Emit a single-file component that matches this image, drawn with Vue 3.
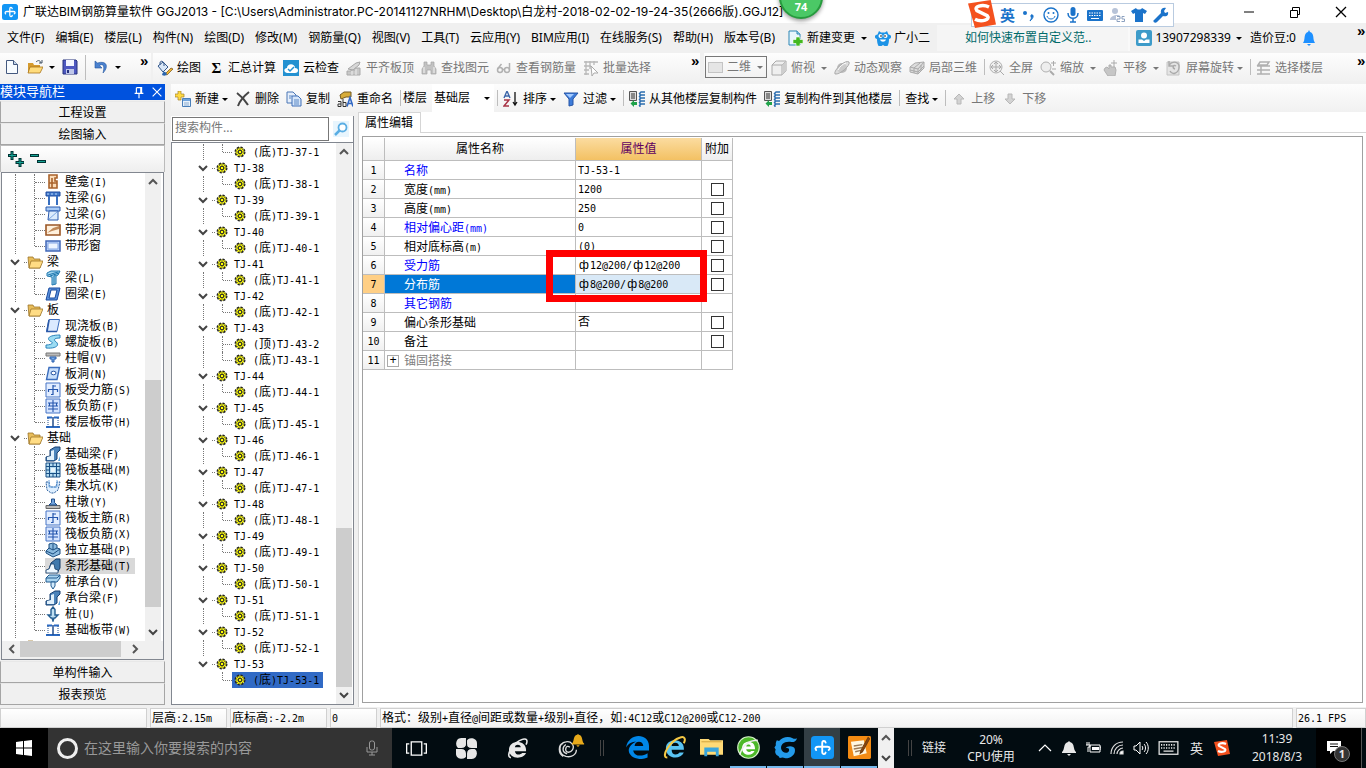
<script setup>
import { h, reactive } from 'vue'

const icons = {
  app: '<rect width="16" height="16" rx="2.500" fill="#1296f5"/><path d="M10.200 4.600C9.800 3 7.800 3 7.800 5v6c0 2 2 2 2.400.5M3.600 9.800C2.400 8.300 3.500 7.500 5 7.500h6.500c1.800 0 2 1.500.8 2.300" fill="none" stroke="#fff" stroke-width="1.300" stroke-linecap="round"/>',
  changeDoc: '<path d="M2 1h8l3 3v11H2z" fill="#e8f6fc" stroke="#2c86b5"/><path d="M10 1v3h3" fill="#9fd3ea" stroke="#2c86b5"/><path d="M9 7h4v2.500h3v4h-3V16H9v-2.500H6v-4h3z" fill="#43b81f" stroke="#fff" stroke-width=".6"/>',
  mascot: '<path d="M4 1l2 1.500h4L12 1l1.500 3.500C17 5 17 8 14 9c0 3-.5 5-1.500 7h-3L8 15l-1.500 1h-3C2.500 14 2 12 2 9-1 8-1 5 2.500 4.500z" fill="#1d93e6"/><circle cx="5.500" cy="6" r="2" fill="#fff"/><circle cx="10.500" cy="6" r="2" fill="#fff"/><circle cx="6" cy="6" r=".8"/><circle cx="10" cy="6" r=".8"/><path d="M5 9.500h6c-1 3-5 3-6 0z" fill="#fff"/>',
  user: '<rect width="16" height="16" rx="2" fill="#3d9bc9"/><circle cx="8" cy="5.500" r="3" fill="#fff"/><path d="M2.500 13V9.500H6L8 11l2-1.500h3.500V13z" fill="#fff"/>',
  bellBlue: '<path d="M8 0l1 2c4 1 3 6 4 9l1 2H2l1-2c1-3 0-8 4-9zM6 14h4l-2 2z" fill="#1e90ff"/>',
  file: '<path d="M2.500 1.500h7l4 4v9h-11z" fill="#f8fcff" stroke="#44597f"/><path d="M9.500 1.500v4h4" fill="#c4d6ea" stroke="#44597f"/>',
  open: '<path d="M1 4h5l1 2h6v8H1z" fill="#d49a2e"/><path d="M3 8h13l-3 6H1z" fill="#ffdc7c" stroke="#a8741c" stroke-width=".8"/><path d="M9 3c2-2 4-2 5 1M12 4h3V1" fill="none" stroke="#456"/>',
  save: '<path d="M1 1h13l1 1v13H1z" fill="#4e58c0" stroke="#26327d"/><path d="M4 1h8v6H4z" fill="#f2f5ff"/><path d="M4 10h8v5H4z" fill="#bfc7e9"/><path d="M5 11h2v3H5z" fill="#26327d"/>',
  undo: '<path d="M2 2v7h7L6.500 6.500C10 4 12 7 10 14c6-6 4-13-5.500-10z" fill="#4b82cf" stroke="#24569d" stroke-width=".6"/>',
  paint: '<path d="M1 6l5-4 5 5-5 5z" fill="#d9e7f7" stroke="#34588c"/><path d="M3 5V3c0-3 4-2 4 1v2" fill="none" stroke="#34588c"/><path d="M8 14l6-6 2 1-6 6z" fill="#f0b432" stroke="#735215" stroke-width=".7"/><path d="M5 15c1-4 3-4 5-1-1 2-3 2-5 1z" fill="#2c66af"/>',
  cloud: '<rect width="16" height="16" fill="#2391d1"/><path d="M4 13C0 12 1 8 4 8c0-5 8-5 8 0 4 0 4 5 0 5z" fill="#fff"/><path d="M5 9l2 2 4-4" fill="none" stroke="#2391d1" stroke-width="1.500"/>',
  align: '<path d="M2 9l8-6 4-1-1 3-6 5z" fill="#d8d8d8" stroke="#a7a7a7"/><path d="M1 15v-4h4v-1h4V8h5v7z" fill="#c8c8c8" stroke="#aaa"/><path d="M6 11v4M10 9v6" stroke="#eee"/>',
  binoc: '<path d="M3 2h3v3h4V2h3v4l2 3v5h-5v-4H6v4H1V9l2-3z" fill="#c2c2c2" stroke="#a4a4a4" stroke-width=".7"/><path d="M3 7v6M13 7v6" stroke="#f4f4f4"/>',
  glasses: '<g fill="none" stroke="#b1b1b1" stroke-width="1.500"><circle cx="4" cy="10" r="2.500"/><circle cx="11" cy="10" r="2.500"/><path d="M6.500 9.500h2M1.500 9l4-5M13.500 10V3"/></g>',
  batch: '<path d="M1 2h14M1 6h7M1 10h5M1 14h5M3 1v14M7 1v8M11 1v4" stroke="#b8b8b8" stroke-width="1.300"/><path d="M8 6l7 7h-4l-2 3z" fill="#fff" stroke="#aaa"/>',
  flat: '<rect x=".5" y="3.500" width="14" height="10" fill="#e5e5e5" stroke="#c4c4c4"/>',
  cube: '<path d="M1 5l4-4h10v10l-4 4H1z" fill="#efefef" stroke="#aaa"/><path d="M1 5h10l4-4M11 5v10" fill="none" stroke="#aaa"/><path d="M11 5l4-4v10l-4 4z" fill="#cecece"/>',
  orbit: '<circle cx="8" cy="8" r="5" fill="#bbb"/><path d="M1 14C-1 10 12-1 15 2c2 3-9 13-14 12z" fill="#d2d2d2" fill-opacity=".7" stroke="#aaa"/><path d="M4 10c2-4 5-6 8-7" fill="none" stroke="#fff"/>',
  cubes: '<path d="M1 7l5-4 9-1v6l-6 6-8-2z" fill="#ddd" stroke="#aaa"/><path d="M1 7l8 2 6-7M9 9v5M5 8l6-5M5 8v5M12 5v6M1 10l8 2 6-6" fill="none" stroke="#aaa"/>',
  fullscreen: '<circle cx="7" cy="7" r="6" fill="#eee" stroke="#b0b0b0"/><path d="M7 2v10M2 7h10M5 4l2-2 2 2M5 10l2 2 2-2M4 5L2 7l2 2M10 5l2 2-2 2M11 11l4 4" fill="none" stroke="#aaa"/>',
  zoom: '<circle cx="6" cy="7" r="5" fill="#eee" stroke="#b0b0b0"/><path d="M10 11l4 4" stroke="#aaa" stroke-width="2"/><path d="M11 3h5M13.500 1v5M12 9h4" stroke="#aaa"/>',
  pan: '<path d="M2 8l2-1 2 2V5h2v2h4l1 3-1 6H5l-4-6z" fill="#c6c6c6" stroke="#b0b0b0"/><path d="M11 0v7M8 3h6" stroke="#aaa"/>',
  rotate: '<path d="M1 2h12v13H1z" fill="#e4e4e4" stroke="#c4c4c4"/><path d="M3 5c4-5 11-3 10 3s-7 7-9 3M3 1v5h4M10 6c-3-2-4 2-1 3" fill="none" stroke="#aaa" stroke-width="1.400"/>',
  floors: '<path d="M5 2h9l-2 3H3zM2 6h4M6 6h9M2 10h4M6 10h9M2 14h13M6 5v9" fill="none" stroke="#b0b0b0" stroke-width="1.500"/>',
  create: '<path d="M7.500 7.500h8v8h-8z" fill="#e9f2fb" stroke="#4a7fb9"/><path d="M8 8h7v2H8z" fill="#6fa3dc"/><path d="M9 12h5M9 14h5" stroke="#8bacd0"/><path d="M3 0h3v3h3v3H6v3H3V6H0V3h3z" fill="#ffda42" stroke="#a5822a" stroke-width=".7"/>',
  del: '<path d="M2 2c4 3 8 7 11 12M14 1C9 5 5 9 3 15" fill="none" stroke="#454545" stroke-width="2"/>',
  copy: '<path d="M1 1h6l3 3v8H1z" fill="#e6effb" stroke="#4a76b5"/><path d="M6 5h6l3 3v7H6z" fill="#d6e6fa" stroke="#3f6fb7"/><path d="M8 9h5M8 11h5M8 13h5M3 5h3M3 7h2" stroke="#5b87c3"/>',
  rename: '<path d="M3 4l4-3h7v5H9L4 8z" fill="#d7ac39" stroke="#735921"/><path d="M10 15.500l3-9 3 9M11 12.500h4" fill="none" stroke="#3168c5" stroke-width="1.600"/><path d="M1 10.500h3v5H1v-2.500h3M6 8v7.500h3v-4H6" fill="none" stroke="#333"/>',
  sort: '<path d="M1 7l3-7 3 7M2 5h4" fill="none" stroke="#3c66a9" stroke-width="1.400"/><path d="M1 9h5l-5 6h5" fill="none" stroke="#a83446" stroke-width="1.500"/><path d="M12 1v13M10 11l2 3 2-3" fill="none" stroke="#111" stroke-width="1.300"/>',
  filter: '<path d="M1 2h14L10 8v6l-4 1V8z" fill="#3d7cda" stroke="#2755a5"/><path d="M3 3h8L7 7z" fill="#a5cbff"/>',
  floorCopy: '<path d="M.5.5h7v9h-7z" fill="#ddd" stroke="#555"/><path d="M2 3h4M2 5h4M2 7h4" stroke="#333"/><path d="M10 3l2-2h4M10 6l2-2h4M10 9l2-2h4M10 12l2-2h4M10 15l2-2h4M11 2v14" fill="none" stroke="#2b6daf" stroke-width="1.300"/><path d="M5 8v3h3v3H5v2l-3.500-3.500L5 9z" fill="#20a34a"/>',
  up: '<path d="M8 3l5 5h-3v5H6V8H3z" fill="#d3d3d3" stroke="#b8b8b8"/>',
  down: '<path d="M8 13l5-5h-3V3H6v5H3z" fill="#d3d3d3" stroke="#b8b8b8"/>',
  search: '<rect width="16" height="16" fill="#e8f5fd"/><circle cx="9.500" cy="6.500" r="4" fill="#fff" stroke="#5aaee4" stroke-width="1.800"/><path d="M6.500 9.500L2 14" stroke="#5aaee4" stroke-width="2.500"/>',
  pin: '<path d="M5 3h6v6M5 3v6M3 9.500h10M8 10v5M10 3v6" fill="none" stroke="#fff" stroke-width="1.300"/>',
  close: '<path d="M3 3l10 10M13 3L3 13" stroke="currentColor" stroke-width="1.300"/>',
  expand: '<path d="M4 0v9M0 4.500h9M12 7v9M7.500 11.500h9" stroke="#033" stroke-width="3"/><path d="M4 1v7M1 4.500h7M12 8v7M8.500 11.500h7" stroke="#16a596" stroke-width="1"/>',
  collapse: '<path d="M0 4.500h9M7 10.500h9" stroke="#033" stroke-width="3"/><path d="M1 4.500h7M8 10.500h7" stroke="#16a596" stroke-width="1"/>',
  chevron: '<path d="M4 6l4 4 4-4" fill="none" stroke="#444" stroke-width="2"/>',
  chevUp: '<path d="M4 10l4-4 4 4" fill="none" stroke="#555" stroke-width="2"/>',
  chevLeft: '<path d="M10 4L6 8l4 4" fill="none" stroke="#555" stroke-width="2"/>',
  chevRight: '<path d="M6 4l4 4-4 4" fill="none" stroke="#555" stroke-width="2"/>',
  caret: '<path d="M2 11l6-6 6 6" fill="none" stroke="#fff" stroke-width="1.200"/>',
  folder: '<path d="M1 3h5l1 2h6v9H2z" fill="#e8bd5a" stroke="#9c7427" stroke-width=".8"/><path d="M4 7h12l-3 7H2z" fill="#ffdc84" stroke="#9c7427" stroke-width=".8"/>',
  gear: '<circle cx="8" cy="8" r="4.700" fill="#ff0" stroke="#222" stroke-width="1.600" stroke-dasharray="2.200 1.490"/><path d="M8 3v10M3 8h10M4.500 4.500l7 7M11.500 4.500l-7 7" stroke="#555" stroke-width=".8"/><circle cx="8" cy="8" r="1.800" fill="#ff0" stroke="#222"/>',
  niche: '<path d="M4 1h8v3h-2v3h2v7H4zM7 4v10M4 9h8" fill="#fbdcb8" stroke="#a9622b" stroke-width="1.600"/>',
  linkBeam: '<path d="M1 2h14v4H1z" fill="#3f77c8" stroke="#1e4da0"/><path d="M4 6v9M12 6v9" stroke="#386fc0" stroke-width="2"/><path d="M2 4h12" stroke="#b7d7ff" stroke-dasharray="2"/>',
  lintel: '<path d="M1 1h14v4H1z" fill="#a8caf5" stroke="#2b5aae"/><path d="M4 5h9v9H3z" fill="#dcebfd" stroke="#2b5aae"/><path d="M4 13l8-7" stroke="#7fa9e3"/>',
  hole: '<path d="M1 3h14v10H1z" fill="#fff0dc" stroke="#9b5524" stroke-width="1.600"/><path d="M2 11l6-5 6-2v3l-7 2z" fill="#c18a59"/>',
  window: '<path d="M1 3h14v10H1z" fill="#b9d2f7" stroke="#4168b8" stroke-width="1.500"/><path d="M3 5h10v6H3z" fill="#eef5ff" stroke="#86a7e5"/>',
  beam: '<path d="M2 3l4-2h9l-2 4-2 1v8l-4 1V7L2 6z" fill="#9fd3ee" stroke="#1f77ae"/><path d="M3 5l10-3M5 6l9-3M9 14V6l2-1" fill="none" stroke="#1f77ae"/>',
  ring: '<path d="M4 2h11l-3 12H1z" fill="#5b91dc" stroke="#184a9f"/><path d="M6 4h6l-2 8H4z" fill="#fff" stroke="#184a9f"/>',
  slab: '<path d="M4 1.500h10.500l-2.500 12H1.500z" fill="#dbeaff" stroke="#3b6dbd"/><path d="M4 2L2 13.500h10" fill="none" stroke="#2c5aa8" stroke-width="1.600"/>',
  spiral: '<path d="M15 1C5 1 1 4 5 7c5 2 1 4-4 4v3c10 1 15-3 9-7-2-2 1-3 5-3z" fill="#9bdcf3" stroke="#2b83bb"/>',
  cap: '<path d="M1 3h14v3H1z" fill="#bbb" stroke="#777"/><path d="M5 7h6v2H9v3H7V9H5z" fill="#78aae4" stroke="#2b5fae"/>',
  slabHole: '<path d="M4 1.500h10.500l-2.500 12H1.500z" fill="#c8dffc" stroke="#3b6dbd" stroke-width="1.400"/><ellipse cx="8.500" cy="7" rx="2.500" ry="1.800" fill="#fff" stroke="#2250a0"/>',
  mesh: '<path d="M1 1h14v14H1z" fill="#e2edff" stroke="#4775c5"/><path d="M8 3v10M3.500 10V7.500h9V10M6 12.500h2M8 4h3" fill="none" stroke="#2355ad" stroke-width="1.200"/>',
  mesh2: '<path d="M1 1h14v14H1z" fill="#d6e5ff" stroke="#4775c5"/><path d="M8 2v12M3 5h10M3 11h10M4.500 5v3M11.500 5v3M3 8h10" fill="none" stroke="#2355ad" stroke-width="1.100"/>',
  strip: '<path d="M2 3.500h5M9 3.500h5M1 13h14" stroke="#2b6ac3" stroke-width="1.800"/><path d="M3 4v9M13 4v9" stroke="#234e8d" stroke-dasharray="1 1"/><path d="M8 3v10" stroke="#234e8d" stroke-width="1.500"/>',
  footBeam: '<path d="M1 15v-4l4-1V4l5-3h5v3l-3 3v6l-3 2z" fill="#4b83ba" stroke="#163f70"/><path d="M2 14v-3l4-1V5l3-1v10z" fill="#e1f1fc"/><path d="M13 15l2-5v5z" fill="#65a7db"/>',
  raft: '<path d="M1 1h14v14H1z" fill="#b4dbf0" stroke="#174f85"/><path d="M4.500 4.500h7v7h-7zM4.500 1v14M11.500 1v14M1 4.500h14M1 11.500h14M8 1v3M8 12v3M1 8h3M12 8h3" fill="none" stroke="#174f85"/><path d="M6 6h4v4H6z" fill="#e7f5fc"/>',
  pit: '<path d="M1 4h3l1 5h6l1-5h3l-2 8-4 3H6l-4-3z" fill="#deefff" stroke="#295d9d" stroke-dasharray="2 1"/><path d="M4 2v7h8V2" fill="none" stroke="#6ea6df"/>',
  pier: '<path d="M1 11.500h14v3H1z" fill="#bbb" stroke="#666"/><path d="M6.500 5h3v3.500l2.500 2.500H4l2.500-2.500z" fill="#6fa3de" stroke="#1f4c89"/>',
  isolated: '<path d="M1 9l3-3V2l4-1 4 2v3l3 1v5l-7 3-7-4z" fill="#8bbadf" stroke="#1c4e81"/><path d="M4 6l4 2 4-2M8 8V2M1 9l7 3 7-5" fill="none" stroke="#1c4e81"/>',
  stripFoot: '<path d="M4 11l2-6 5-4h4v9l-3 5z" fill="#3f79ad" stroke="#153d69"/><path d="M1 15v-3l3-1 2-5h3l1 5 3 1v3z" fill="#eef8ff" stroke="#153d69" stroke-width=".8"/>',
  pileCap: '<path d="M1 4l3-3h11v3l-3 4H1z" fill="#aad4ef" stroke="#225c91"/><path d="M6 8h4v4l-2 3-2-3z" fill="#d3ebfc" stroke="#225c91"/><path d="M1 4h11l3-3" fill="none" stroke="#225c91"/>',
  pile: '<path d="M8 1l2 2.500V9h3l-3 3H9l-1 3-1-3H6L3 9h3V3.500z" fill="#bfdff2" stroke="#225c91" stroke-width="1.400"/>',
  mic: '<rect x="5.500" y="1" width="5" height="9" rx="2" fill="none" stroke="currentColor"/><path d="M3 7v5h10V7M8 12v3M5 15h6" fill="none" stroke="currentColor"/>',
  windows: '<path d="M0 2l7-1v6.500H0zM8 1l8-1v7.500H8zM0 8.500h7V15l-7-1zM8 8.500h8V16l-8-1z" fill="#fff"/>',
  taskView: '<path d="M4 3h8v10H4zM2.500 4.500h-2v7h2M13.500 4.500h2v7h-2" fill="none" stroke="#fff"/>',
  fan: '<path d="M8 0v5.500L6 8H3C-1 8-1 0 4 0z" fill="#e7e7e7"/><path d="M16 8h-5.500L8 6V3c0-4 8-4 8 1z" fill="#e7e7e7"/><path d="M8 16v-5.500L10 8h3c4 0 4 8-1 8z" fill="#e7e7e7"/><path d="M0 8h5.500L8 10v3c0 4-8 4-8-1z" fill="#e7e7e7"/><path d="M8 0v5C8 7 6 8 4 8H0M16 8h-4C9 8 8 7 8 4M8 16v-4c0-2 1-4 4-4M4 8c3 0 4 2 4 4" fill="none" stroke="#020c11" stroke-width=".8"/>',
  eWhite: '<path d="M1.500 9C1.500 1 14.500 1 14.500 9v1H6c.5 3.200 4 3.200 5.500 1.500h3c-2 5-13 5-13-2.500zM6 7h4.500C10 4.600 6.500 4.600 6 7z" fill="#e9e9e9"/><path d="M3 15C-2 14 5 3 12 1c3-1 4 1 2.500 4" fill="none" stroke="#e9e9e9" stroke-width="1.200"/>',
  alarm: '<path d="M14 9c0 4-4 6-8 5C0 12 0 4 6 3c4-1 7 3 5 6s-6 2-5-1c0-2 2-2 3-1M4 4C0 5 0 12 4 14M6 5c-3 2-3 6 1 7" fill="none" stroke="#ddd" stroke-width="1"/>',
  bell: '<path d="M8 1l1 1c5 1 3 8 6 10v1H1v-1c3-2 1-9 6-10zM6 14h4l-2 2z" fill="currentColor"/>',
  edge: '<path d="M0 8C2-3 16-2 16 7v3H5c1 5 7 4 10 2v3C8 18 1 14 2 9c1-3 3-4 5-5-3 0-5 1-7 4zM6 7h6c0-4-6-4-6 0z" fill="#0087e8"/>',
  ie: '<path d="M2 8.500C2 1 14.500 1 14.500 8.500V9.500H6c0 4 4 4 5.500 2h3C12 17 2 16 2 8.500zM6 7h5c0-3-5-3-5 0z" fill="#59c3f2"/><path d="M3 15C-2 15 5 3 12 1c3-1 4 1 2.500 4" fill="none" stroke="#f6c945" stroke-width="1.400"/>',
  folderWin: '<path d="M0 2h6l1 1h9v10H0z" fill="#ffda76"/><path d="M3 8h10v6h-2v-3H5v3H3z" fill="#39a5dc"/><path d="M1 4h14" stroke="#d9ab45" stroke-width=".8"/>',
  greenE: '<circle cx="8" cy="8" r="7.500" fill="#4db829" stroke="#d4f1c8" stroke-width=".8"/><path d="M3.500 8.500c0-6 9-6 9 0v.8H6.400c.3 2.200 2.600 2.200 3.600 1.200h2.200c-1.400 3.800-8.700 3.500-8.700-2zM6.400 7.300h3.200c-.3-1.800-2.900-1.800-3.200 0z" fill="#fff"/><path d="M2 13C4 6 9 3 14.500 3" fill="none" stroke="#eee"/>',
  gBlue: '<path d="M13 1.500c1 .6 2 .4 3 0-.5 2-2 2.800-4 2.700C7 3.500 4.500 6 5 9c.6 3 5 3.500 5.500 1 .2-1.500-1-2-2.500-1.500C9 6.500 14 6.500 14.500 9c.8 4-3 6.500-6.500 6.500l-2-.5-2 .3-.8-1.300C1 13 .3 11 1.200 9.500L.3 8l1-1.500C1 5 1.500 4 2 3l1.500.5C6 .5 10 0 13 1.500z" fill="#239bea"/>',
  notes: '<rect width="16" height="16" rx="1" fill="#f38b13"/><path d="M2 4l9-1 2 9-9 2z" fill="#fff7df"/><path d="M4 7l6-1M4 9l6-1M5 11l4-1" stroke="#9a7955"/><path d="M14 1l1 1-5 9-1.500 1 .5-2z" fill="#8b4513" stroke="#713e0c" stroke-width=".7"/>',
  battery: '<path d="M5 5h10v7H5zM15 7h1v3M2 2v3M4 2v3M1 5h4v2H3v5" fill="none" stroke="#fff"/><path d="M7 7h7v3H7z" fill="#fff"/>',
  wifi: '<g fill="none" stroke="#ddd" stroke-width="1.200"><path d="M2 14C2 7 7 2 14 2M5 14c0-5 4-9 9-9M8 14c0-3 3-6 6-6"/><path d="M11 14c0-2 1-3 3-3v3z" fill="#fff"/></g>',
  volume: '<path d="M1 6h2l4-4v12l-4-4H1zM9 6c1 1 1 3 0 4M11 4c2 2 2 6 0 8M13 2c3 3 3 9 0 12" fill="none" stroke="#fff"/>',
  keyboard: '<rect x=".5" y="3" width="15" height="10" fill="none" stroke="currentColor"/><path d="M2 5.500h12M2 8h12" stroke="currentColor" stroke-width="1.300" stroke-dasharray="1 1"/><path d="M4 10.500h8" stroke="currentColor"/>',
  sogou: '<path d="M0 2l13-2 3 14-12 2z" fill="#f4511e"/><path d="M12 4C8 2 3 4 5 6l6 3c2 2-3 4-7 2" fill="none" stroke="#fff" stroke-width="2"/>',
  smile: '<circle cx="8" cy="8" r="7" fill="none" stroke="#1b73ca" stroke-width="1.400"/><circle cx="5.500" cy="6" r="1" fill="#1b73ca"/><circle cx="10.500" cy="6" r="1" fill="#1b73ca"/><path d="M4 9c1 4 7 4 8 0" fill="none" stroke="#1b73ca"/>',
  micBlue: '<rect x="5.500" y="0" width="5" height="9" rx="2.500" fill="#1b73ca"/><path d="M3 6c0 7 10 7 10 0M8 11v4M5 15h6" fill="none" stroke="#1b73ca" stroke-width="1.500"/>',
  keysBlue: '<rect y="3" width="16" height="11" rx="1" fill="#1b73ca"/><path d="M2 6h12M2 8.500h12" stroke="#fff" stroke-dasharray="1.500 1"/><path d="M4 11.500h8" stroke="#fff"/>',
  person: '<circle cx="6" cy="4" r="3" fill="#b7c3d8"/><path d="M1 13c0-5 9-6 10-4H7v4z" fill="#b7c3d8"/><path d="M8 9.500h3v2.500H8v2.500h3M15.500 9.500H13V12h2.500v2.500H12.500" fill="none" stroke="#8ba0bf"/>',
  shirt: '<path d="M5 1c1 2 5 2 6 0l5 3-2 3-2-1v9H4V6L2 7 0 4z" fill="#1b73ca"/>',
  wrench: '<path d="M1 13l7-7c-1-4 2-6 5-5l-2 3 1 2 3-1c1 4-3 5-5 4l-6 6c-2 2-5-1-3-2z" fill="#1b73ca"/>',
  punct: '<circle cx="4" cy="6" r="2" fill="#1b73ca"/><path d="M10 8c3-1 3 3-1 6 1-2 2-3 1-4z" fill="#1b73ca" stroke="#1b73ca"/>',
  minimize: '<path d="M3 8h10" stroke="#000"/>',
  restore: '<path d="M3.500 6.500h7v7h-7zM5.500 6V3.500h7v7H11" fill="none" stroke="#000"/>',
  chat: '<path d="M1 1h14v10H7l-3 3v-3H1z" fill="#fff"/><path d="M4 4h8M4 6.500h8" stroke="#111"/>'
}

const Icon = (props) =>
  h('svg', { class: 'ico', viewBox: '0 0 16 16', 'aria-hidden': 'true', innerHTML: icons[props.name] })
Icon.props = ['name']

const Mono = (props) =>
  h(
    'span',
    { class: 'mono' },
    (props.text.match(/ф|[\x20-\x7e]+|[^\x20-\x7eф]+/g) || []).map((run) =>
      h('span', { class: run === 'ф' ? 'phi' : /^[\x20-\x7e]/.test(run) ? 'narrow' : 'wide' }, run)
    )
  )
Mono.props = ['text']

const menus = ['文件(F)', '编辑(E)', '楼层(L)', '构件(N)', '绘图(D)', '修改(M)', '钢筋量(Q)', '视图(V)', '工具(T)', '云应用(Y)', 'BIM应用(I)', '在线服务(S)', '帮助(H)', '版本号(B)']

const drawTools = [
  { icon: 'paint', label: '绘图' },
  { sigma: true, label: '汇总计算' },
  { icon: 'cloud', label: '云检查' },
  { icon: 'align', label: '平齐板顶', off: true },
  { icon: 'binoc', label: '查找图元', off: true },
  { icon: 'glasses', label: '查看钢筋量', off: true },
  { icon: 'batch', label: '批量选择', off: true }
]
const viewTools = [
  { icon: 'cube', label: '俯视', arrow: true },
  { icon: 'orbit', label: '动态观察' },
  { icon: 'cubes', label: '局部三维' },
  { sep: true },
  { icon: 'fullscreen', label: '全屏' },
  { icon: 'zoom', label: '缩放', arrow: true },
  { icon: 'pan', label: '平移', arrow: true },
  { icon: 'rotate', label: '屏幕旋转', arrow: true, tight: true },
  { sep: true },
  { icon: 'floors', label: '选择楼层' }
]
const editTools = [
  { icon: 'create', label: '新建', arrow: true, tight: true },
  { icon: 'del', label: '删除' },
  { icon: 'copy', label: '复制' },
  { icon: 'rename', label: '重命名' }
]
const listTools = [
  { icon: 'sort', label: '排序', arrow: true, tight: true },
  { icon: 'filter', label: '过滤', arrow: true, tight: true },
  { sep: true },
  { icon: 'floorCopy', label: '从其他楼层复制构件' },
  { icon: 'floorCopy', label: '复制构件到其他楼层' },
  { sep: true },
  { label: '查找', arrow: true, tight: true },
  { sep: true },
  { icon: 'up', label: '上移', off: true },
  { icon: 'down', label: '下移', off: true }
]

const group = (label, items) => [
  { folder: true, label },
  ...items.map(([icon, text], i) => ({ icon, label: text, last: i === items.length - 1 }))
]
const moduleRows = [
  { icon: 'niche', label: '壁龛(I)' },
  { icon: 'linkBeam', label: '连梁(G)' },
  { icon: 'lintel', label: '过梁(G)' },
  { icon: 'hole', label: '带形洞' },
  { icon: 'window', label: '带形窗', last: true },
  ...group('梁', [['beam', '梁(L)'], ['ring', '圈梁(E)']]),
  ...group('板', [
    ['slab', '现浇板(B)'], ['spiral', '螺旋板(B)'], ['cap', '柱帽(V)'], ['slabHole', '板洞(N)'],
    ['mesh', '板受力筋(S)'], ['mesh2', '板负筋(F)'], ['strip', '楼层板带(H)']
  ]),
  ...group('基础', [
    ['footBeam', '基础梁(F)'], ['raft', '筏板基础(M)'], ['pit', '集水坑(K)'], ['pier', '柱墩(Y)'],
    ['mesh', '筏板主筋(R)'], ['mesh2', '筏板负筋(X)'], ['isolated', '独立基础(P)'], ['stripFoot', '条形基础(T)'],
    ['pileCap', '桩承台(V)'], ['footBeam', '承台梁(F)'], ['pile', '桩(U)'], ['strip', '基础板带(W)']
  ]),
  { folder: true, label: '' }
]

const partRows = [{ child: true, last: true, label: '(底)TJ-37-1' }]
for (let n = 38; n <= 53; n++) {
  partRows.push({ label: `TJ-${n}` })
  if (n === 43) partRows.push({ child: true, label: '(顶)TJ-43-2' })
  partRows.push({ child: true, last: true, end: n === 53, label: `(底)TJ-${n}-1` })
}

const props = reactive([
  { name: '名称', value: 'TJ-53-1', blue: true },
  { name: '宽度(mm)', value: '1200', check: true },
  { name: '高度(mm)', value: '250', check: true },
  { name: '相对偏心距(mm)', value: '0', blue: true, check: true },
  { name: '相对底标高(m)', value: '(0)', check: true },
  { name: '受力筋', value: 'ф12@200/ф12@200', blue: true, check: true },
  { name: '分布筋', value: 'ф8@200/ф8@200', active: true, check: true },
  { name: '其它钢筋', value: '', blue: true },
  { name: '偏心条形基础', value: '否', check: true },
  { name: '备注', value: '', check: true },
  { name: '锚固搭接', value: '', group: true }
])

const apps = [
  { icon: 'edge', label: 'Edge' },
  { icon: 'ie', label: 'Internet Explorer' },
  { icon: 'folderWin', label: '文件资源管理器' },
  { icon: 'greenE', label: '浏览器', run: true },
  { icon: 'gBlue', label: 'G', run: true },
  { icon: 'app', label: 'GGJ2013', run: true, active: true },
  { icon: 'notes', label: '便笺', run: true }
]
</script>

<template>
  <div class="desktop">
    <header class="titlebar">
      <Icon name="app" />
      <h1>广联达BIM钢筋算量软件 GGJ2013 - [C:\Users\Administrator.PC-20141127NRHM\Desktop\白龙村-2018-02-02-19-24-35(2666版).GGJ12]</h1>
      <div class="winctl">
        <button aria-label="最小化"><Icon name="minimize" /></button>
        <button aria-label="还原"><Icon name="restore" /></button>
        <button aria-label="关闭"><Icon name="close" /></button>
      </div>
      <div class="ball">74</div>
      <div class="ime">
        <Icon name="sogou" class="ime-logo" /><b>英</b><Icon name="punct" /><Icon name="smile" /><Icon name="micBlue" /><Icon name="keysBlue" /><Icon name="person" /><Icon name="shirt" /><Icon name="wrench" />
      </div>
    </header>

    <nav class="menubar">
      <div class="menus">
        <button v-for="m in menus" :key="m">{{ m }}</button>
      </div>
      <button class="tool change"><Icon name="changeDoc" />新建变更<i class="arrow"></i></button>
      <button class="tool"><Icon name="mascot" />广小二</button>
      <div class="tip"><a href="#">如何快速布置自定义范..</a></div>
      <div class="account">
        <button class="tool phone"><Icon name="user" />13907298339<i class="arrow"></i></button>
        <span>造价豆:0</span>
        <Icon name="bellBlue" />
      </div>
      <span class="more">»</span>
    </nav>

    <div class="toolbar">
      <div class="strip files">
        <button aria-label="新建"><Icon name="file" /></button>
        <button aria-label="打开" class="drop"><Icon name="open" /><i class="arrow"></i></button>
        <button aria-label="保存"><Icon name="save" /></button>
        <i class="sep tall"></i>
        <button aria-label="撤销" class="drop"><Icon name="undo" /><i class="arrow"></i></button>
        <span class="more">»</span>
      </div>
      <div class="strip draw">
        <button v-for="t in drawTools" :key="t.label" class="tool" :class="{ off: t.off }">
          <b v-if="t.sigma" class="sigma">Σ</b><Icon v-else :name="t.icon" />{{ t.label }}
        </button>
        <span class="more">»</span>
      </div>
      <div class="strip view">
        <label class="mode"><Icon name="flat" />
          <select aria-label="视图模式"><option>二维</option></select><i class="arrow"></i>
        </label>
        <template v-for="(t, i) in viewTools" :key="i">
          <i v-if="t.sep" class="sep"></i>
          <button v-else class="tool off" :class="{ tight: t.tight }"><Icon :name="t.icon" />{{ t.label }}<i v-if="t.arrow" class="arrow"></i></button>
        </template>
        <span class="more">»</span>
      </div>
    </div>

    <main class="work">
      <aside class="modules">
        <h2>模块导航栏<span><Icon name="pin" /><Icon name="close" /></span></h2>
        <button class="section">工程设置</button>
        <button class="section">绘图输入</button>
        <div class="treetools">
          <button aria-label="全部展开"><Icon name="expand" /></button>
          <button aria-label="全部折叠"><Icon name="collapse" /></button>
        </div>
        <div class="treebox">
          <div class="treepane">
            <ul class="tree">
              <li v-for="(r, i) in moduleRows" :key="i" class="row" :class="{ picked: r.icon === 'stripFoot' }">
                <template v-if="r.folder">
                  <Icon name="chevron" class="lead" /><i class="twig short"></i><Icon name="folder" />
                </template>
                <template v-else>
                  <i class="trunk"></i><i class="stem" :class="{ half: r.last }"></i><i class="twig"></i><Icon :name="r.icon" />
                </template>
                <Mono :text="r.label" />
              </li>
            </ul>
            <div class="vbar">
              <Icon name="chevUp" /><i class="thumb"></i><Icon name="chevron" />
            </div>
          </div>
          <div class="hbar"><Icon name="chevLeft" /><i class="thumb"></i><Icon name="chevRight" /></div>
        </div>
        <button class="section">单构件输入</button>
        <button class="section">报表预览</button>
      </aside>

      <section class="editor">
        <div class="strip edit">
          <button v-for="t in editTools" :key="t.label" class="tool" :class="{ tight: t.tight }">
            <Icon :name="t.icon" />{{ t.label }}<i v-if="t.arrow" class="arrow"></i>
          </button>
          <i class="sep"></i>
          <label class="floor"><span>楼层</span>
            <select><option>基础层</option></select><i class="arrow"></i>
          </label>
          <i class="sep"></i>
          <template v-for="(t, i) in listTools" :key="i">
            <i v-if="t.sep" class="sep"></i>
            <button v-else class="tool" :class="{ off: t.off, tight: t.tight }">
              <Icon v-if="t.icon" :name="t.icon" />{{ t.label }}<i v-if="t.arrow" class="arrow"></i>
            </button>
          </template>
        </div>

        <div class="panes">
          <div class="parts">
            <div class="search">
              <input type="text" placeholder="搜索构件..." aria-label="搜索构件" />
              <button aria-label="搜索"><Icon name="search" /></button>
            </div>
            <div class="partpane">
              <ul class="tree">
                <li v-for="(r, i) in partRows" :key="i" class="row" :class="{ end: r.end }">
                  <template v-if="r.child">
                    <i class="trunk"></i><i class="stem" :class="{ half: r.last }"></i><i class="twig"></i>
                  </template>
                  <template v-else><Icon name="chevron" class="lead" /><i class="twig short"></i></template>
                  <span class="leaf"><Icon name="gear" /><Mono :text="r.label" /></span>
                </li>
              </ul>
              <div class="vbar">
                <Icon name="chevUp" /><i class="thumb"></i><Icon name="chevron" />
              </div>
            </div>
          </div>

          <div class="properties">
            <div class="tabs"><button class="tab">属性编辑</button></div>
            <div class="sheet">
              <div class="gridwrap">
                <table>
                  <colgroup><col class="c-no" /><col class="c-name" /><col class="c-val" /><col class="c-add" /></colgroup>
                  <thead>
                    <tr><th></th><th>属性名称</th><th class="hot">属性值</th><th>附加</th></tr>
                  </thead>
                  <tbody>
                    <tr v-for="(p, i) in props" :key="p.name" :class="{ active: p.active }">
                      <th scope="row"><Mono :text="String(i + 1)" /></th>
                      <td class="name" :class="{ blue: p.blue, group: p.group }"><div class="cell"><button v-if="p.group" class="plus" aria-label="展开">+</button><Mono :text="p.name" /></div></td>
                      <td class="value"><Mono :text="p.value" /></td>
                      <td class="add"><input v-if="p.check" v-model="p.added" type="checkbox" :aria-label="p.name + ' 附加'" /></td>
                    </tr>
                  </tbody>
                </table>
                <div class="marker"></div>
              </div>
            </div>
          </div>
        </div>
      </section>
    </main>

    <footer class="status">
      <div class="s1"></div>
      <div class="s2"><Mono text="层高:2.15m" /></div>
      <div class="s3"><Mono text="底标高:-2.2m" /></div>
      <div class="s4"><Mono text="0" /></div>
      <div class="s5"><Mono text="格式：级别+直径@间距或数量+级别+直径，如:4C12或C12@200或C12-200" /></div>
      <div class="s6"><Mono text="26.1 FPS" /></div>
    </footer>

    <div class="taskbar">
      <button class="start" aria-label="开始"><Icon name="windows" /></button>
      <div class="cortana"><i class="halo"></i><input type="text" placeholder="在这里输入你要搜索的内容" aria-label="搜索" /><Icon name="mic" /></div>
      <div class="pinned">
        <button aria-label="任务视图"><Icon name="taskView" /></button>
        <button aria-label="风扇"><Icon name="fan" /></button>
        <button aria-label="浏览器"><Icon name="eWhite" /></button>
        <button aria-label="提醒" class="remind"><Icon name="alarm" /><Icon name="bell" class="gold" /></button>
      </div>
      <i class="grip"></i>
      <div class="apps">
        <button v-for="a in apps" :key="a.icon" :aria-label="a.label" :class="{ run: a.run, active: a.active }"><Icon :name="a.icon" /></button>
      </div>
      <div class="spin"><Icon name="chevUp" /><Icon name="chevron" /></div>
      <i class="grip right"></i>
      <span class="links">链接</span>
      <div class="cpu">20%<br />CPU使用</div>
      <div class="tray">
        <Icon name="caret" /><Icon name="bell" /><Icon name="battery" /><Icon name="wifi" /><Icon name="volume" /><Icon name="keyboard" class="kb" /><span>英</span><Icon name="sogou" />
      </div>
      <div class="clock">11:39<br />2018/8/3</div>
      <button class="notify" aria-label="通知"><Icon name="chat" /><b>1</b></button>
    </div>
  </div>
</template>

<style>
body {
  overflow: hidden;
  background: #f0f0f0;
}
.ico {
  display: block;
  flex: none;
  width: 16px;
  height: 16px;
}
.mono {
  white-space: pre;
}
.mono .narrow {
  font-family: "DejaVu Sans Mono", "Liberation Mono", monospace;
  font-size: 10px;
  line-height: 10px;
}
.mono .phi {
  display: inline-block;
  width: 12px;
  text-align: center;
  font-family: "Liberation Sans", sans-serif;
  font-size: 12px;
  line-height: 12px;
}
</style>

<style scoped>
* {
  box-sizing: border-box;
}
.desktop {
  display: flex;
  flex-direction: column;
  height: 100vh;
  font: 12px/16px "Noto Sans", "Noto Sans CJK SC", sans-serif;
  color: #000;
  background: #f0f0f0;
}
button,
input,
select {
  font: inherit;
  color: inherit;
  margin: 0;
  padding: 0;
  border: 0;
  background: none;
}
button {
  display: flex;
  align-items: center;
  flex: none;
  white-space: nowrap;
}
select {
  appearance: none;
  outline: none;
}
.arrow {
  flex: none;
  border: 3px solid transparent;
  border-top-color: currentColor;
  border-bottom: 0;
}

/* title bar */
.titlebar {
  position: relative;
  display: flex;
  align-items: center;
  flex: none;
  height: 23px;
  padding-left: 2px;
  gap: 5px;
  background: #fff;
}
h1 {
  flex: 1;
  margin: 0;
  font: 12px/20px Inter, "Noto Sans CJK SC", sans-serif;
  white-space: nowrap;
}
.winctl {
  display: flex;
  gap: 30px;
  padding-right: 17px;
}
.ball {
  position: absolute;
  left: 779px;
  top: -25px;
  width: 44px;
  height: 44px;
  padding-top: 22px;
  border: 2px solid #279b3e;
  border-radius: 50%;
  background: #4bc866;
  box-shadow: 0 2px 4px rgba(0, 0, 0, 0.4);
  color: #fff;
  font-weight: 700;
  font-size: 11px;
  text-align: center;
  z-index: 2;
}
.ime {
  position: absolute;
  right: 192px;
  top: 3px;
  display: flex;
  align-items: center;
  gap: 6px;
  height: 24px;
  padding: 0 4px 0 28px;
  border: 1px solid #b9cbe0;
  background: #fff;
  z-index: 2;
}
.ime b {
  color: #1b73ca;
  font-size: 15px;
}
.ime-logo {
  position: absolute;
  left: -4px;
  top: -4px;
  width: 28px;
  height: 28px;
}

/* menu bar */
.menubar {
  display: flex;
  align-items: center;
  flex: none;
  height: 30px;
  padding-left: 7px;
}
.menus {
  display: flex;
  gap: 11px;
}
.tool {
  gap: 4px;
  margin-right: 7px;
}
.strip .tool {
  padding-top: 2px;
}
.change {
  margin-left: 12px;
}
.tool .arrow {
  margin: 0 1px 0 2px;
}
.view .arrow {
  margin-right: 0;
}
.tool.tight .arrow {
  margin: 0 0 0 -1px;
}
.menubar .tool {
  margin-right: 3px;
}
.change + .tool {
  margin-left: 4px;
}
.change + .tool,
.phone {
  gap: 3px;
}
.tip {
  flex: 1;
  height: 26px;
  margin-left: 4px;
  line-height: 26px;
  padding-left: 28px;
  border-right: 2px solid #f9f9f9;
  background: #f5f5f5;
}
.tip a {
  color: #006a6a;
  text-decoration: none;
}
.account {
  display: flex;
  align-items: center;
  gap: 4px;
  padding: 0 40px 0 5px;
}
.account .ico {
  margin-left: 1px;
}
.more {
  flex: none;
  align-self: flex-start;
  width: 9px;
  margin-left: auto;
  font: 700 15px/16px "Liberation Sans", sans-serif;
}

/* toolbars */
.toolbar {
  display: flex;
  flex: none;
  height: 30px;
}
.strip {
  display: flex;
  align-items: center;
  background: linear-gradient(#fdfdfd, #f1f1f1);
}
.toolbar .strip {
  height: 28px;
}
.files {
  width: 151px;
  padding: 0 2px 0 4px;
  margin-right: 2px;
  gap: 7px;
}
.files .drop {
  gap: 6px;
}
.draw {
  width: 547px;
  padding: 0 0 0 4px;
  margin-right: 4px;
}
.view {
  flex: 1;
  padding: 0 0 0 1px;
}
.off {
  color: #777;
}
.sigma {
  width: 16px;
  padding-left: 1px;
  font: 700 15px/16px "Liberation Serif", serif;
}
.sep {
  flex: none;
  width: 1px;
  height: 16px;
  margin: 0 5px 0 0;
  background: #bdbdbd;
}
.view .sep {
  margin-right: 4px;
}
.sep.tall {
  height: 25px;
  margin: 0;
}
.mode {
  display: flex;
  align-items: center;
  gap: 3px;
  height: 22px;
  width: 62px;
  padding: 0 3px 0 2px;
  margin-right: 4px;
  border: 1px solid #777;
  color: #777;
}
.mode select {
  width: 31px;
}

/* work area */
.work {
  display: flex;
  flex: 1;
  min-height: 0;
}
.modules {
  display: flex;
  flex-direction: column;
  width: 165px;
  padding-bottom: 2px;
  margin-right: 6px;
}
h2 {
  display: flex;
  justify-content: space-between;
  flex: none;
  height: 16px;
  margin: 1px 0;
  font: 13px/14px "Noto Sans CJK SC", sans-serif;
  color: #fff;
  background: #0052de;
}
h2 span {
  display: flex;
  gap: 4px;
  padding-right: 1px;
}
h2 .ico {
  width: 14px;
}
.section {
  justify-content: center;
  height: 22px;
  padding-top: 1px;
  border: 1px solid #a5a5a5;
  border-top-color: #e8e8e8;
  background: #f0f0f0;
}
.treetools {
  display: flex;
  flex: none;
  gap: 6px;
  height: 27px;
  padding: 5px 7px;
  border: 1px solid #bbb;
  border-bottom: 0;
  background: linear-gradient(#fff, #eee);
}
.treebox {
  display: flex;
  flex-direction: column;
  flex: 1;
  min-height: 0;
  margin: 0 1px 1px;
  border: 1px solid #828790;
  background: #fff;
}
.treepane,
.partpane {
  display: flex;
  flex: 1;
  min-height: 0;
  overflow: hidden;
}
.tree {
  flex: 1;
  margin: 0;
  padding: 1px 0 0;
  list-style: none;
  overflow: hidden;
}
.row {
  display: flex;
  align-items: center;
  height: 16px;
  line-height: 16px;
  white-space: nowrap;
}
.treepane .row {
  padding-left: 5px;
}
.trunk,
.stem {
  align-self: stretch;
  flex: none;
  width: 19px;
  margin-left: 8px;
  border-left: 1px dotted #777;
}
.stem {
  width: 1px;
  margin-left: 0;
}
.stem.half {
  height: 8px;
  align-self: flex-start;
}
.twig {
  flex: none;
  width: 10px;
  border-top: 1px dotted #777;
}
.twig.short {
  width: 3px;
  margin: 0 0 0 1px;
}
.treepane .row .mono {
  padding: 0 4px;
}
.picked .ico,
.picked .mono {
  background: #d9d9d9;
}
.vbar {
  display: flex;
  flex-direction: column;
  flex: none;
  width: 16px;
  background: #f0f0f0;
  padding: 1px 0;
}
.thumb {
  background: #cdcdcd;
}
.treepane .vbar {
  margin-right: 2px;
}
.treepane .vbar .thumb {
  flex: 228;
}
.treepane .vbar .ico:first-child {
  margin-bottom: 190px;
}
.vbar .ico:last-child {
  margin-top: auto;
}
.treepane .vbar .ico:last-child {
  margin-top: 17px;
}
.hbar {
  display: flex;
  flex: none;
  height: 18px;
  padding: 0 20px 2px 2px;
  background: #f0f0f0;
}
.hbar .thumb {
  width: 102px;
  margin-right: 6px;
}

.editor {
  display: flex;
  flex-direction: column;
  flex: 1;
  min-width: 0;
}
.edit {
  flex: none;
  height: 28px;
  margin-top: 1px;
  padding-left: 4px;
}
.floor {
  display: flex;
  align-items: center;
  margin: 0 7px 0 -3px;
}
.floor select {
  width: 62px;
  height: 28px;
  margin-left: 5px;
  padding-left: 2px;
  background: #fff;
}
.floor .arrow {
  margin-left: -10px;
}
.panes {
  display: flex;
  flex: 1;
  min-height: 0;
}
.parts {
  display: flex;
  flex-direction: column;
  width: 183px;
  margin: 4px 4px 2px 0;
  border-right: 1px solid #828790;
}
.search {
  display: flex;
  flex: none;
  height: 26px;
  padding: 1px;
  background: #fff;
}
.search input {
  width: 157px;
  border: 1px solid #777;
  padding: 0 0 2px 2px;
}
.search input::placeholder {
  color: #777;
}
.search button {
  margin-left: 4px;
}
.partpane {
  border: 1px solid #828790;
  border-right: 0;
  background: #fff;
}
.partpane .row {
  padding-left: 23px;
}
.leaf {
  display: flex;
}
.leaf .mono {
  padding: 0 4px 0 5px;
}
.twig.short + .leaf {
  margin-left: -1px;
}
.twig.short + .leaf .mono {
  padding-left: 4px;
}
.partpane .twig {
  width: 9px;
}
.partpane .twig.short {
  width: 3px;
}
.end .trunk {
  border-color: transparent;
}
.end .leaf {
  background: #316ac5;
}
.partpane .vbar {
  margin-right: 1px;
}
.partpane .vbar .thumb {
  flex: 158;
}
.partpane .vbar .ico:first-child {
  margin-bottom: 368px;
}

.properties {
  display: flex;
  flex-direction: column;
  flex: 1;
  min-width: 0;
  padding: 0 3px 4px 3px;
  border-left: 1px solid #d5d5d5;
  background: #fff;
}
.tabs {
  flex: none;
  height: 21px;
  margin: 0 -3px 3px;
  border-bottom: 1px solid #d5d5d5;
}
.tab {
  height: 21px;
  padding: 0 7px 0 6px;
  border: 1px solid #d5d5d5;
  border-width: 1px 1px 0 0;
  background: #fff;
}
.sheet {
  flex: 1;
  min-height: 0;
  border: 1px solid #a0a0a0;
  padding-top: 1px;
}
.gridwrap {
  position: relative;
  width: 370px;
}
table {
  width: 370px;
  table-layout: fixed;
  border-collapse: separate;
  border-spacing: 0;
}
.c-no {
  width: 22px;
}
.c-name {
  width: 191px;
}
.c-val {
  width: 126px;
}
.c-add {
  width: 31px;
}
th,
td {
  height: 19px;
  padding: 0;
  border: 1px solid #bdbdbd;
  border-width: 0 1px 1px 0;
  font-weight: 400;
  line-height: 16px;
  white-space: nowrap;
}
thead th {
  height: 23px;
  background: linear-gradient(#fff, #eee);
}
tbody th {
  background: linear-gradient(#fff, #f0f0f0);
}
thead .hot {
  background: linear-gradient(#fbdca0, #f3c163);
  color: #600060;
}
td.name {
  padding-left: 19px;
}
.cell {
  display: flex;
  align-items: center;
  height: 18px;
  padding-top: 2px;
}
.blue {
  color: #00f;
}
.group {
  color: #808080;
}
td.group {
  padding-left: 2px;
}
.plus {
  justify-content: center;
  width: 12px;
  height: 12px;
  margin-right: 5px;
  border: 1px solid #aaa;
  color: #000;
  font: 12px/10px "Liberation Mono", monospace;
}
td.value {
  padding-left: 2px;
}
td.add {
  text-align: center;
}
td input {
  appearance: none;
  display: block;
  width: 13px;
  height: 13px;
  margin: 0 auto;
  border: 1px solid #333;
  background: #fff;
}
.active th {
  background: #ffcf85;
}
.active .name {
  color: #fff;
  background: #0078d7;
}
.active .value {
  background: #d9e9f7;
}
.marker {
  position: absolute;
  left: 183px;
  top: 112px;
  width: 161px;
  height: 52px;
  border: 7px solid #f00;
  pointer-events: none;
}

/* status bar */
.status {
  display: flex;
  flex: none;
  gap: 3px;
  height: 21px;
  padding-top: 1px;
}
.status div {
  height: 20px;
  padding-left: 1px;
  line-height: 18px;
  white-space: nowrap;
  border: 1px solid #d0d0d0;
  background: linear-gradient(#fff, #f2f2f2);
}
.s1 {
  width: 147px;
}
.s2 {
  width: 77px;
}
.s3 {
  width: 97px;
}
.s4 {
  width: 47px;
}
.s5 {
  flex: 1;
}
.s6 {
  width: 70px;
}

/* taskbar */
.taskbar {
  display: flex;
  align-items: center;
  flex: none;
  height: 40px;
  color: #e8e8e8;
  background: #020c11;
}
.start {
  justify-content: center;
  width: 48px;
  height: 40px;
  background: #000;
}
.cortana {
  display: flex;
  align-items: center;
  width: 344px;
  height: 40px;
  padding: 0 12px 0 9px;
  background: #333;
  color: #999;
}
.halo {
  width: 21px;
  height: 21px;
  border: 3px solid #eee;
  border-radius: 50%;
}
.cortana input {
  flex: 1;
  min-width: 0;
  margin-left: 6px;
  font-size: 14px;
}
.cortana input::placeholder {
  color: #999;
}
.cortana .ico {
  height: 18px;
}
.pinned {
  display: flex;
}
.pinned button {
  justify-content: center;
  width: 51px;
  height: 40px;
}
.pinned button:first-child {
  width: 49px;
}
.pinned .ico {
  width: 21px;
  height: 21px;
}
.remind {
  position: relative;
}
.pinned .gold {
  position: absolute;
  right: 9px;
  top: 5px;
  width: 14px;
  height: 14px;
  color: #e8aa1a;
}
.grip {
  width: 4px;
  height: 16px;
  margin: 0 15px 0 6px;
  border: 1px solid #444;
  border-width: 0 1px;
}
.apps {
  display: flex;
}
.apps button {
  justify-content: center;
  width: 36px;
  height: 40px;
  margin-right: 1px;
  border-bottom: 2px solid transparent;
}
.apps .ico {
  width: 23px;
  height: 23px;
}
.apps .run {
  border-bottom-color: #76b9ed;
}
.apps .active {
  background: #333f45;
}
.spin {
  width: 16px;
  height: 40px;
  padding: 2px 0;
  display: flex;
  flex-direction: column;
  justify-content: space-between;
  background: #f0f0f0;
}
.grip.right {
  margin: 0 10px 0 14px;
}
.links {
  width: 24px;
}
.cpu {
  width: 64px;
  margin-left: 13px;
  text-align: center;
  line-height: 17px;
}
.tray {
  display: flex;
  align-items: center;
  gap: 8px;
  margin-left: auto;
}
.tray .kb {
  width: 23px;
  height: 20px;
}
.tray span {
  margin: 0 3px 0 2px;
  font-size: 13px;
}
.clock {
  width: 78px;
  margin-left: 8px;
  text-align: center;
  line-height: 18px;
}
.notify {
  position: relative;
  width: 46px;
  height: 40px;
  padding-left: 10px;
  margin-right: 4px;
  border-right: 1px solid #555;
  background: #000;
}
.notify b {
  position: absolute;
  left: 18px;
  top: 18px;
  width: 16px;
  height: 16px;
  border: 1px solid #777;
  border-radius: 50%;
  background: #333;
  font: 700 11px/14px "Noto Sans", sans-serif;
  text-align: center;
}
</style>
